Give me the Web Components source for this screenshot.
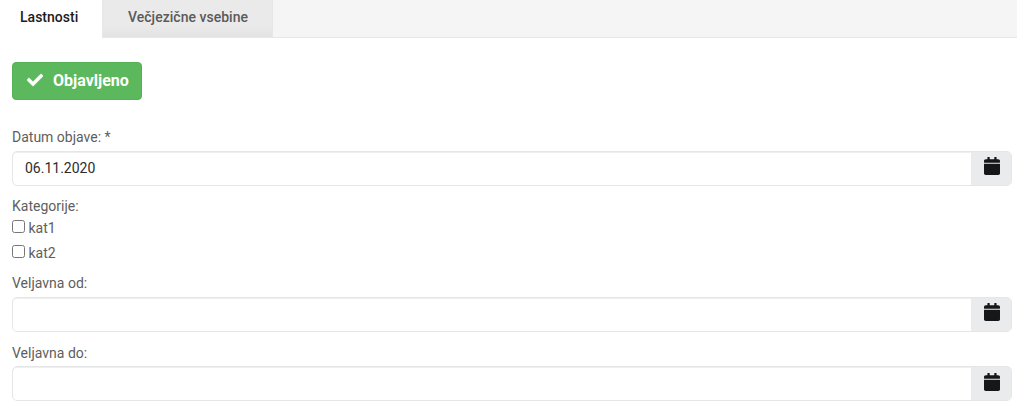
<!DOCTYPE html>
<html lang="sl">
<head>
<meta charset="utf-8">
<title>Lastnosti</title>
<style>
html{background:#fff}
body{margin:0;font:14px/20px Roboto,"Open Sans",sans-serif;color:#5e5e5e;overflow:hidden}
</style>
</head>
<body>
<post-editor></post-editor>
<script>
function define(name, markup) {
  const template = document.createElement('template');
  template.innerHTML = markup;
  customElements.define(name, class extends HTMLElement {
    constructor() {
      super();
      this.attachShadow({mode: 'open'}).append(template.content.cloneNode(true));
    }
  });
}

define('tab-bar', `<style>
:host{display:flex;height:38px;box-sizing:border-box;background:linear-gradient(#e7e7e7,#e7e7e7) bottom/100% 1px no-repeat,#f5f5f5}
</style><slot></slot>`);

define('tab-item', `<style>
:host{display:block;box-sizing:border-box;height:37px;padding:7px 25px 0;background:linear-gradient(#eaeaea 70%,#e3e3e3);color:#5a5a5a;font-weight:500;border-right:1px solid #e7e7e7;border-left:1px solid #e7e7e7;white-space:nowrap;width:171px;letter-spacing:.02px}
:host([active]){background:#fff;color:#1c1c1c;height:38px;width:102px;padding:7px 20px 0;border:0}
</style><slot></slot>`);

define('status-button', `<style>
:host{display:flex;width:130px;height:38px;box-sizing:border-box;align-items:center;padding:0 13px 0 14px;gap:10px;border-radius:4px;background:#5cb85c;border:1px solid #55b155;color:#fff;font-size:16px;font-weight:700;white-space:nowrap}
svg{width:16px;height:16px;fill:currentColor;stroke:currentColor;stroke-width:14;flex:none;margin-bottom:2px}
</style><svg viewBox="0 0 512 512"><path d="M173.898 439.404l-166.4-166.4c-9.997-9.997-9.997-26.206 0-36.204l36.203-36.204c9.997-9.998 26.207-9.998 36.204 0L192 312.69 432.095 72.596c9.997-9.997 26.207-9.997 36.204 0l36.203 36.204c9.997 9.997 9.997 26.206 0 36.204l-294.4 294.401c-9.998 9.997-26.207 9.997-36.204-.001z"/></svg><slot></slot>`);

define('date-field', `<style>
:host{display:block}
.label{height:var(--label-height,24px)}
.group{display:flex;height:35px;box-sizing:border-box;border:1px solid #e5e6e7;border-radius:5px;overflow:hidden;background:#fff;box-shadow:inset 0 1px #efefef}
.value{flex:1;padding:6px 12px;color:#2c2c2c}
.addon{width:40px;background:#e9ebed;display:flex;justify-content:center;align-items:flex-start;padding:var(--icon-top,5px) 0 0 2px;box-sizing:border-box}
svg{width:16px;height:18px;fill:#151719}
</style><div class="label"><slot name="label"></slot></div>
<div class="group"><div class="value"><slot></slot></div><div class="addon"><svg viewBox="0 0 448 512" preserveAspectRatio="none"><path d="M12 192h424c6.600 0 12 5.400 12 12v260c0 26.500-21.500 48-48 48H48c-26.500 0-48-21.500-48-48V204c0-6.600 5.400-12 12-12zm436-44v-36c0-26.500-21.500-48-48-48h-48V12c0-6.600-5.400-12-12-12h-40c-6.600 0-12 5.400-12 12v52H160V12c0-6.600-5.400-12-12-12h-40c-6.600 0-12 5.400-12 12v52H48C21.500 64 0 85.500 0 112v36c0 6.600 5.400 12 12 12h424c6.600 0 12-5.400 12-12z"/></svg></div></div>`);

define('check-option', `<style>
:host{display:block;height:25px}
label{display:flex;gap:3.5px;align-items:flex-start}
input{width:13px;height:13px;margin:2px 0 0}
</style><label><input type="checkbox"><span><slot></slot></span></label>`);

define('post-editor', `<style>
:host{display:block}
main{padding:24px 5px 0 12px}
.published{margin-top:27px}
.categories{margin-top:10px;height:77px}
.title{height:22px}
.until{margin-top:11px;--label-height:23px;--icon-top:6px}
</style>
<tab-bar><tab-item active>Lastnosti</tab-item><tab-item>Večjezične vsebine</tab-item></tab-bar>
<main>
<status-button>Objavljeno</status-button>
<date-field class="published"><span slot="label">Datum objave: *</span>06.11.2020</date-field>
<section class="categories"><div class="title">Kategorije:</div><check-option>kat1</check-option><check-option>kat2</check-option></section>
<date-field class="from"><span slot="label">Veljavna od:</span></date-field>
<date-field class="until"><span slot="label">Veljavna do:</span></date-field>
</main>`);
</script>
</body>
</html>
